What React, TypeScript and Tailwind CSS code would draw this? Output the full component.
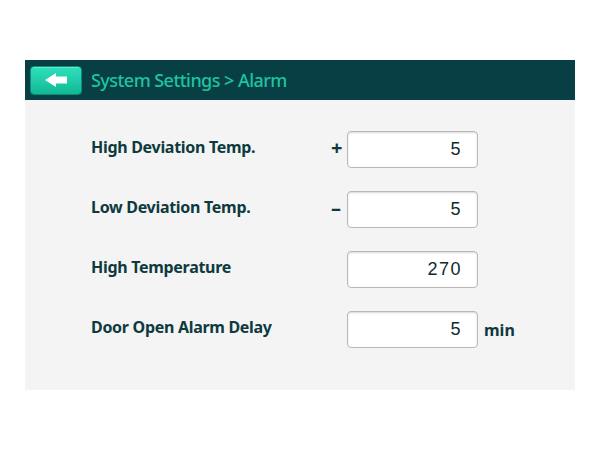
import React from "react";

const rows = [
  { label: "High Deviation Temp.", sign: "+", value: "5", unit: "" },
  { label: "Low Deviation Temp.", sign: "–", value: "5", unit: "" },
  { label: "High Temperature", sign: "", value: "270", unit: "" },
  { label: "Door Open Alarm Delay", sign: "", value: "5", unit: "min" },
];

function BackArrow() {
  return (
    <svg width="23" height="14" viewBox="0 0 23 14">
      <path d="M0 7 L11 0 L11 3.5 L22 3.5 L22 10.5 L11 10.5 L11 14 Z" fill="#ffffff" />
    </svg>
  );
}

export default function App() {
  return (
    <div
      className="w-[600px] h-[450px] bg-white pt-[60px] px-[25px]"
      style={{ fontFamily: '"Noto Sans", "Liberation Sans", sans-serif' }}
    >
      <div className="w-[550px] h-[330px] bg-[#f4f4f4] flex flex-col">
        {/* Header */}
        <div className="h-[40px] bg-[#073f45] flex items-center pl-[5px] gap-[9px]">
          <button className="w-[52px] h-[29px] rounded-[4px] bg-gradient-to-b from-[#2ee0bd] to-[#0fb996] border border-[#0a8f77] flex items-center justify-center shadow-[inset_0_1px_0_rgba(255,255,255,0.3)]">
            <BackArrow />
          </button>
          <span className="text-[18px] text-[#1ec4a2] font-medium tracking-[-0.55px]">
            System Settings &gt; Alarm
          </span>
        </div>

        {/* Body */}
        <div className="flex flex-col pt-[31px] pl-[66px] gap-[23px]">
          {rows.map((r) => (
            <div key={r.label} className="flex items-center h-[37px]">
              <div className="w-[238px] text-[16px] font-bold text-[#0e3a3e] tracking-[-0.3px] -mt-[5px]">
                {r.label}
              </div>
              <div className="w-[18px] text-[20px] font-bold text-[#0e3a3e] leading-none pl-[2px] -mt-[3px]">
                {r.sign}
              </div>
              <div className="w-[131px] h-[37px] bg-white border border-[#b9b9b9] rounded-[4px] shadow-[inset_0_1px_2px_rgba(0,0,0,0.15)] flex items-center justify-end pr-[15px]">
                <span
                  className="text-[18px] text-[#0e2a2c] tracking-[1.5px]"
                  style={{ fontFamily: '"Liberation Sans", Arial, sans-serif' }}
                >
                  {r.value}
                </span>
              </div>
              {r.unit && (
                <span className="ml-[6px] text-[16px] font-bold text-[#0e3a3e]">{r.unit}</span>
              )}
            </div>
          ))}
        </div>
      </div>
    </div>
  );
}
